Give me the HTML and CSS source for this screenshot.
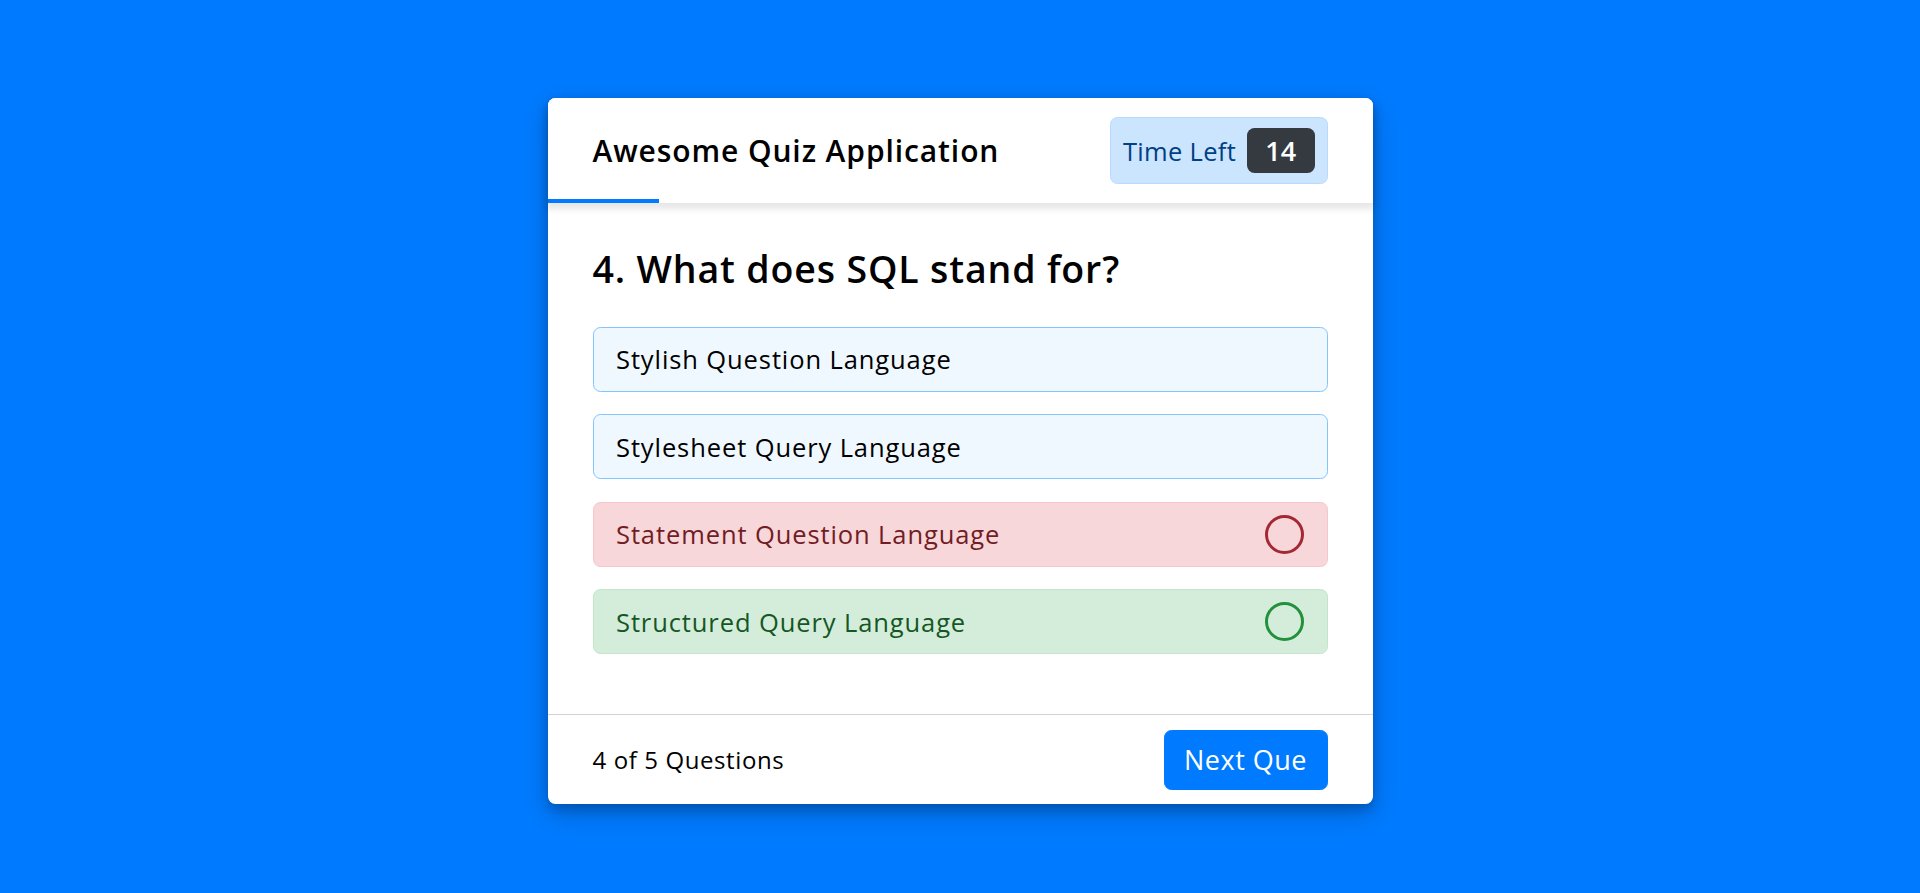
FILE: index.html
```html
<!DOCTYPE html>
<html lang="en">
<head>
<meta charset="utf-8">
<title>Awesome Quiz Application</title>
<link rel="stylesheet" href="styles.css">
</head>
<body>
<div class="quiz-box">
  <header class="quiz-header">
    <div class="title">Awesome Quiz Application</div>
    <div class="timer">
      <div class="time-left-txt">Time Left</div>
      <div class="timer-sec">14</div>
    </div>
    <div class="time-line" style="width: 111px;"></div>
  </header>
  <section class="quiz-body">
    <div class="que-text">4. What does SQL stand for?</div>
    <div class="option-list">
      <div class="option">Stylish Question Language</div>
      <div class="option">Stylesheet Query Language</div>
      <div class="option incorrect">Statement Question Language<span class="icon cross"></span></div>
      <div class="option correct">Structured Query Language<span class="icon tick"></span></div>
    </div>
  </section>
  <footer class="quiz-footer">
    <div class="total-que"><span class="num">4</span> of <span class="num">5</span> Questions</div>
    <button class="next-btn">Next Que</button>
  </footer>
</div>
</body>
</html>
```
FILE: styles.css
```css
* {
  margin: 0;
  padding: 0;
  box-sizing: border-box;
}
html, body {
  height: 100%;
}
body {
  background: #007bff;
  font-family: "Open Sans", "Liberation Sans", sans-serif;
  color: #000;
  overflow: hidden;
}
.quiz-box {
  width: 825px;
  margin: 98px auto 0;
  background: #fff;
  border-radius: 7.5px;
  box-shadow: 0 6px 12px 0 rgba(0, 0, 0, 0.2), 0 9px 30px 0 rgba(0, 0, 0, 0.19);
}
.quiz-header {
  position: relative;
  z-index: 2;
  height: 105px;
  padding: 0 45px;
  background: #fff;
  border-radius: 7.5px 7.5px 0 0;
  display: flex;
  align-items: center;
  justify-content: space-between;
  box-shadow: 0 4.5px 7.5px 1.5px rgba(0, 0, 0, 0.1);
}
.title {
  font-size: 30px;
  font-weight: 600;
  line-height: 1.5;
  letter-spacing: 0.9px;
}
.timer {
  color: #004085;
  background: #cce5ff;
  border: 1.5px solid #b8daff;
  height: 67.5px;
  width: 217.5px;
  padding: 0 12px;
  border-radius: 7.5px;
  display: flex;
  align-items: center;
  justify-content: space-between;
}
.time-left-txt {
  font-size: 25.5px;
  font-weight: 400;
  letter-spacing: 0.3px;
}
.timer-sec {
  font-size: 27px;
  font-weight: 600;
  height: 45px;
  width: 67.5px;
  color: #fff;
  border-radius: 7.5px;
  line-height: 45px;
  text-align: center;
  background: #343a40;
}
.time-line {
  position: absolute;
  bottom: 0;
  left: 0;
  height: 4.5px;
  background: #007bff;
}
.quiz-body {
  padding: 37.5px 45px 30px;
  background: #fff;
}
.que-text {
  font-size: 37.5px;
  font-weight: 600;
  line-height: 1.5;
  letter-spacing: 0.85px;
}
.option-list {
  padding: 30px 0;
  display: flex;
  flex-direction: column;
  gap: 22.5px;
}
.option {
  height: 65px;
  background: aliceblue;
  border: 1.5px solid #84c5fe;
  border-radius: 7.5px;
  padding: 0 22.5px;
  font-size: 25.5px;
  letter-spacing: 0.9px;
  display: flex;
  align-items: center;
  justify-content: space-between;
}
.option.correct {
  color: #155724;
  background: #d4edda;
  border-color: #c3e6cb;
}
.option.incorrect {
  color: #721c24;
  background: #f8d7da;
  border-color: #f5c6cb;
}
.icon {
  height: 39px;
  width: 39px;
  border: 3px solid transparent;
  border-radius: 50%;
  flex-shrink: 0;
}
.icon.tick {
  border-color: #23903c;
}
.icon.cross {
  border-color: #a42834;
}
.quiz-footer {
  height: 90px;
  padding: 0 45px;
  display: flex;
  align-items: center;
  justify-content: space-between;
  border-top: 1.5px solid lightgrey;
}
.total-que {
  font-size: 24px;
  letter-spacing: 0.6px;
}
.total-que .num {
  font-weight: 500;
}
.next-btn {
  height: 60px;
  padding: 0 19.5px;
  font-family: inherit;
  font-size: 27px;
  font-weight: 400;
  letter-spacing: 0.5px;
  border: 1.5px solid #007bff;
  color: #fff;
  border-radius: 7.5px;
  background: #007bff;
}
```
